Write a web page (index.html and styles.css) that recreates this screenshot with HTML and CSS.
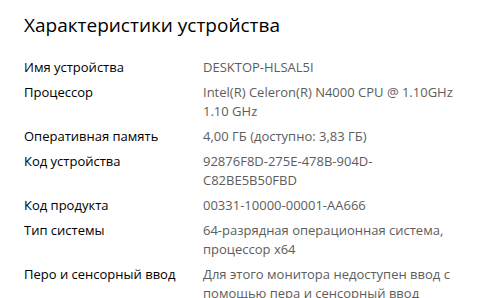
FILE: index.html
```html
<!DOCTYPE html>
<html>

<head>
    <title>Характеристики устройства</title>
    <link rel="stylesheet" href="styles.css">
</head>

<body>
    <div class="specs">
        <h1 class="title">Характеристики устройства</h1>
        <div class="grid">
            <div class="label">Имя устройства</div>
            <div class="value">DESKTOP-HLSAL5I</div>

            <div class="label">Процессор</div>
            <div class="value">Intel(R) Celeron(R) N4000 CPU @ 1.10GHz 1.10 GHz</div>

            <div class="label">Оперативная память</div>
            <div class="value">4,00 ГБ (доступно: 3,83 ГБ)</div>

            <div class="label">Код устройства</div>
            <div class="value">92876F8D-275E-478B-904D-<wbr>C82BE5B50FBD</div>

            <div class="label">Код продукта</div>
            <div class="value">00331-10000-00001-AA666</div>

            <div class="label">Тип системы</div>
            <div class="value">64-разрядная операционная система, процессор x64</div>

            <div class="label">Перо и сенсорный ввод</div>
            <div class="value">Для этого монитора недоступен ввод с помощью пера и сенсорный ввод</div>
        </div>
    </div>
</body>

</html>
```

FILE: styles.css
```css
/* Settings page */
body {
    margin: 0;
    background-color: #fff;
    font-family: "Open Sans", "Noto Sans", sans-serif;
    color: #000;
    overflow: hidden;
}

.specs {
    padding: 12px 0 0 24px;
}

.title {
    margin: 0 0 20px 0;
    font-size: 19px;
    font-weight: 400;
    line-height: 26px;
}

.grid {
    display: grid;
    grid-template-columns: 179px 262px;
    row-gap: 6px;
    font-size: 13px;
    line-height: 19px;
}

.label {
    color: #000;
}

.value {
    color: #5d5d5d;
}
```
